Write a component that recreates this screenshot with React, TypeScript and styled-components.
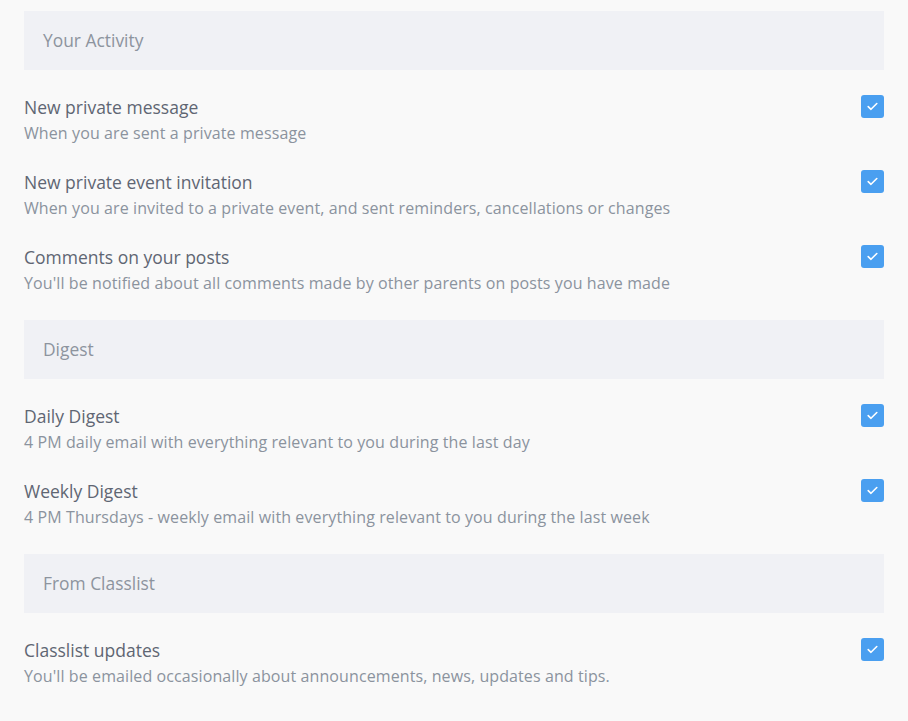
import React from "react";
import styled, { createGlobalStyle } from "styled-components";

const Global = createGlobalStyle`
  html, body { margin: 0; padding: 0; background: #f9f9f9; }
  body { font-family: "Open Sans", "Noto Sans", sans-serif; }
`;

const Page = styled.div`
  padding: 11px 24px 0 24px;
  display: flex;
  flex-direction: column;
`;

const SectionHeader = styled.div`
  height: 59px;
  box-sizing: border-box;
  background: #f0f1f5;
  display: flex;
  align-items: center;
  padding: 0 0 2px 19px;
  font-size: 17.4px;
  color: #8d949e;
`;

const List = styled.div`
  display: flex;
  flex-direction: column;
  gap: 23px;
  padding: 25px 0 23px 0;
`;

const Row = styled.div`
  display: flex;
  justify-content: space-between;
  align-items: flex-start;
`;

const Texts = styled.div`
  display: flex;
  flex-direction: column;
`;

const Title = styled.div`
  font-size: 17.5px;
  line-height: 24px;
  color: #5f6673;
`;

const Desc = styled.div`
  font-size: 16px;
  letter-spacing: 0.1px;
  line-height: 28px;
  color: #8b939e;
`;

const Check = styled.div`
  width: 23px;
  height: 23px;
  border-radius: 3px;
  background: #4a9ff0;
  display: flex;
  align-items: center;
  justify-content: center;
  flex-shrink: 0;
`;

const sections = [
  {
    title: "Your Activity",
    items: [
      ["New private message", "When you are sent a private message"],
      [
        "New private event invitation",
        "When you are invited to a private event, and sent reminders, cancellations or changes",
      ],
      [
        "Comments on your posts",
        "You'll be notified about all comments made by other parents on posts you have made",
      ],
    ],
  },
  {
    title: "Digest",
    items: [
      ["Daily Digest", "4 PM daily email with everything relevant to you during the last day"],
      [
        "Weekly Digest",
        "4 PM Thursdays - weekly email with everything relevant to you during the last week",
      ],
    ],
  },
  {
    title: "From Classlist",
    items: [
      [
        "Classlist updates",
        "You'll be emailed occasionally about announcements, news, updates and tips.",
      ],
    ],
  },
];

export default function App() {
  return (
    <>
      <Global />
      <Page>
        {sections.map((s) => (
          <React.Fragment key={s.title}>
            <SectionHeader>{s.title}</SectionHeader>
            <List>
              {s.items.map(([t, d]) => (
                <Row key={t}>
                  <Texts>
                    <Title>{t}</Title>
                    <Desc>{d}</Desc>
                  </Texts>
                  <Check>
                    <svg width="11" height="9" viewBox="0 0 11 9">
                      <path d="M1.2 4.6 L4 7.3 L9.8 1.5" fill="none" stroke="#ffffff" strokeWidth="1.6" strokeLinecap="round" strokeLinejoin="round" />
                    </svg>
                  </Check>
                </Row>
              ))}
            </List>
          </React.Fragment>
        ))}
      </Page>
    </>
  );
}
